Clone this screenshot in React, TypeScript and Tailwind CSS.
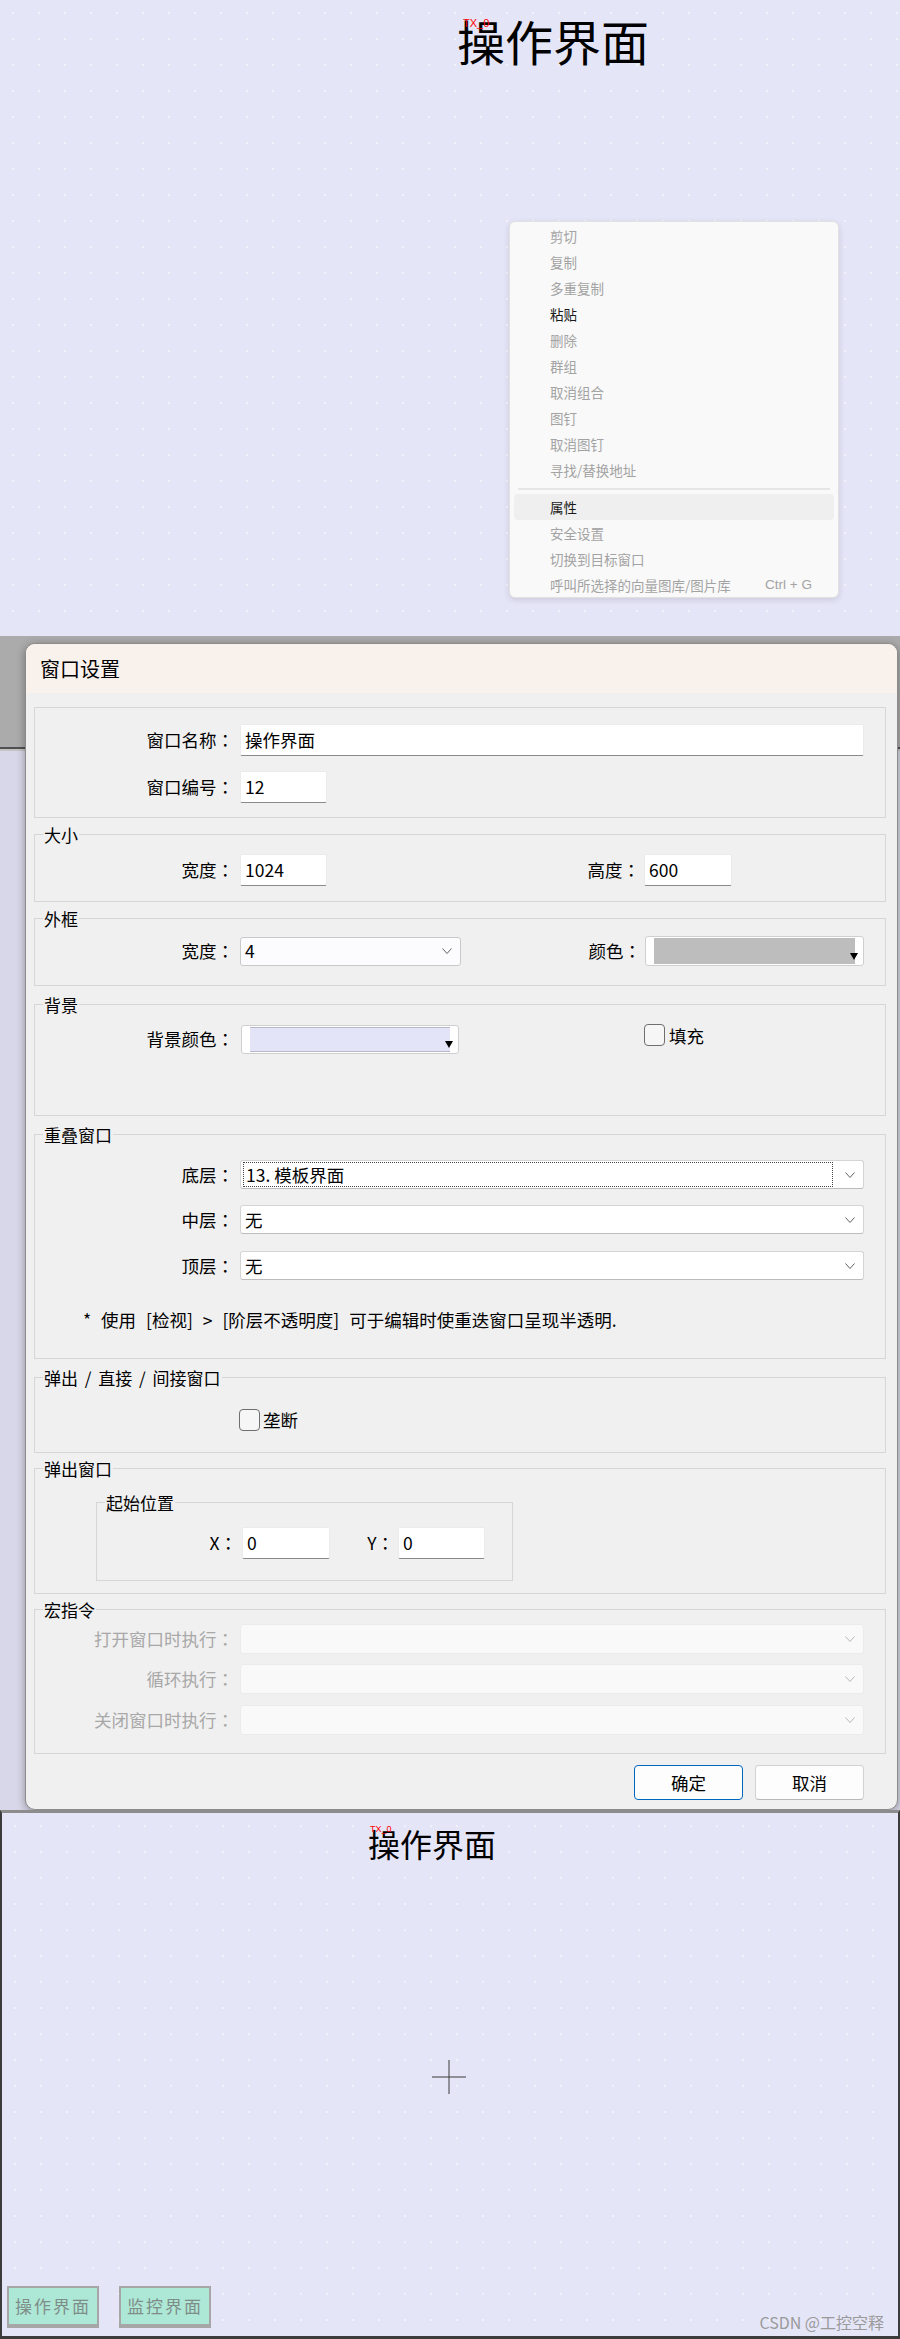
import React from "react";

const Chevron = ({ color = "#606060" }: { color?: string }) => (
  <svg width="10" height="6" viewBox="0 0 10 6" fill="none">
    <path d="M0.5 0.5L5 5.5L9.5 0.5" stroke={color} strokeWidth="1" />
  </svg>
);

const Colon = () => <span className="font-['Noto_Sans_CJK_JP','Noto_Sans_CJK_SC',sans-serif]">：</span>;

function Section({
  title,
  className,
  titleClass,
  children,
}: {
  title?: string;
  className: string;
  titleClass?: string;
  children?: React.ReactNode;
}) {
  return (
    <div className={"border border-[#d6d6d6] " + className}>
      {title && (
        <div
          className={
            "-mt-[10px] ml-[8px] w-fit bg-[#f0f0f0] px-[1px] text-[17px] leading-[20px] text-black " + (titleClass ?? "")
          }
        >
          {title}
        </div>
      )}
      {children}
    </div>
  );
}

const Label = ({ children, gray }: { children: React.ReactNode; gray?: boolean }) => (
  <div className={"w-[199px] shrink-0 text-right " + (gray ? "text-[#a8a8a8]" : "text-black")}>
    {children}
    <Colon />
  </div>
);

const TextBox = ({ className, children }: { className: string; children?: React.ReactNode }) => (
  <div
    className={
      "flex h-[32px] items-center rounded-[2px] border border-[#ebebeb] border-b-[#8a8a8a] bg-white pl-[4px] text-black " +
      className
    }
  >
    {children}
  </div>
);

const Select = ({
  className,
  children,
  disabled,
}: {
  className: string;
  children?: React.ReactNode;
  disabled?: boolean;
}) => (
  <div
    className={
      "flex items-center justify-between rounded-[3px] border pl-[4px] pr-[8px] " +
      (disabled ? "border-[#ebebeb] bg-[#f9f9f9]" : "border-[#d4d4d4] border-b-[#bcbcbc] bg-white") +
      " " +
      className
    }
  >
    <div className="flex items-center">{children}</div>
    <Chevron color={disabled ? "#b8b8b8" : "#606060"} />
  </div>
);

const ColorPick = ({ className, fill }: { className: string; fill: string }) => (
  <div className={"relative flex rounded-[3px] border border-[#cfcfcf] bg-white px-[8px] py-[1px] " + className}>
    <div className={"flex-1 " + fill} />
    <div className="absolute bottom-[5px] right-[5px] h-0 w-0 border-l-[4px] border-r-[4px] border-t-[7px] border-l-transparent border-r-transparent border-t-black" />
  </div>
);

const CheckBox = () => <div className="h-[22px] w-[21px] shrink-0 rounded-[4px] border border-[#6f6f6f] bg-[#f6f6f6]" />;

const menuTop: [string, boolean][] = [
  ["剪切", false],
  ["复制", false],
  ["多重复制", false],
  ["粘贴", true],
  ["删除", false],
  ["群组", false],
  ["取消组合", false],
  ["图钉", false],
  ["取消图钉", false],
  ["寻找/替换地址", false],
];

function ContextMenu() {
  return (
    <div className="absolute left-[509px] top-[221px] h-[377px] w-[330px] rounded-[6px] border border-[#e1e1e1] bg-[#f9f9f9] pt-[1px] text-[13.5px] shadow-[0_2px_6px_rgba(0,0,0,0.12)]">
      {menuTop.map(([t, en]) => (
        <div
          key={t}
          className={"mx-[4px] flex h-[26px] items-center pl-[36px] " + (en ? "text-[#1a1a1a]" : "text-[#a3a3a3]")}
        >
          {t}
        </div>
      ))}
      <div className="flex h-[11px] items-center px-[8px]">
        <div className="h-[2px] w-full bg-[#e6e6e6]" />
      </div>
      <div className="mx-[4px] flex h-[26px] items-center rounded-[4px] bg-[#efefef] pl-[36px] text-[#1a1a1a]">属性</div>
      <div className="mx-[4px] flex h-[26px] items-center pl-[36px] text-[#a3a3a3]">安全设置</div>
      <div className="mx-[4px] flex h-[26px] items-center pl-[36px] text-[#a3a3a3]">切换到目标窗口</div>
      <div className="mx-[4px] flex h-[26px] items-center justify-between pl-[36px] pr-[22px] text-[#a3a3a3]">
        <span>呼叫所选择的向量图库/图片库</span>
        <span className="font-['Liberation_Sans',sans-serif]">Ctrl + G</span>
      </div>
    </div>
  );
}

function Dialog() {
  return (
    <div className="ml-[25px] mt-[7px] h-[1167px] w-[873px] shrink-0 overflow-hidden rounded-[10px] border border-[#8c8c8c] bg-[#f0f0f0] text-[17.5px] leading-[20px] shadow-[0_2px_8px_rgba(0,0,0,0.35)]">
      <div className="flex h-[49px] items-center bg-[#f9f1ec] pl-[14px] text-[20px] text-black">窗口设置</div>
      <div className="flex flex-col pl-[8px] pr-[11px] pt-[14px]">
        {/* section 1 */}
        <Section className="h-[111px]">
          <div className="mt-[16px] flex h-[32px] items-center">
            <Label>窗口名称</Label>
            <TextBox className="ml-[6px] w-[624px]">操作界面</TextBox>
          </div>
          <div className="mt-[15px] flex h-[32px] items-center">
            <Label>窗口编号</Label>
            <TextBox className="ml-[6px] w-[87px]">12</TextBox>
          </div>
        </Section>

        {/* 大小 */}
        <Section title="大小" className="mt-[16px] h-[68px]">
          <div className="mt-[9px] flex h-[31px] items-center">
            <Label>宽度</Label>
            <TextBox className="ml-[6px] h-[31px] w-[87px]">1024</TextBox>
            <div className="w-[313px] shrink-0 text-right">
              高度
              <Colon />
            </div>
            <TextBox className="ml-[4px] h-[31px] w-[88px]">600</TextBox>
          </div>
        </Section>

        {/* 外框 */}
        <Section title="外框" className="mt-[16px] h-[68px]">
          <div className="mt-[7px] flex h-[30px] items-center">
            <Label>宽度</Label>
            <Select className="ml-[6px] h-[29px] w-[221px] !border-[#c9c9c9] !bg-[#fcfcfe]">4</Select>
            <div className="w-[180px] shrink-0 text-right">
              颜色
              <Colon />
            </div>
            <ColorPick className="ml-[4px] h-[30px] w-[219px]" fill="bg-[#bdbdbd]" />
          </div>
        </Section>

        {/* 背景 */}
        <Section title="背景" className="mt-[18px] h-[112px]">
          <div className="mt-[9px] flex items-start">
            <div className="mt-[5px]">
              <Label>背景颜色</Label>
            </div>
            <ColorPick
              className="ml-[7px] mt-[1px] h-[29px] w-[218px]"
              fill="bg-[#e4e4f8] border-y border-[#b8b8c8]"
            />
            <div className="ml-[185px]">
              <CheckBox />
            </div>
            <div className="ml-[4px] mt-[2px]">填充</div>
          </div>
        </Section>

        {/* 重叠窗口 */}
        <Section title="重叠窗口" className="mt-[18px] h-[225px]">
          <div className="mt-[15px] flex h-[29px] items-center">
            <Label>底层</Label>
            <Select className="ml-[6px] h-[29px] w-[624px] !pl-[2px]">
              <div className="flex h-[25px] w-[590px] items-center border border-dotted border-[#444] pl-[2px] text-black">
                13. 模板界面
              </div>
            </Select>
          </div>
          <div className="mt-[16px] flex h-[29px] items-center">
            <Label>中层</Label>
            <Select className="ml-[6px] h-[29px] w-[624px]">无</Select>
          </div>
          <div className="mt-[17px] flex h-[29px] items-center">
            <Label>顶层</Label>
            <Select className="ml-[6px] h-[29px] w-[624px]">无</Select>
          </div>
          <div className="ml-[48px] mt-[30px] text-black [word-spacing:6px]">
            * 使用 [检视] &gt; [阶层不透明度] 可于编辑时使重迭窗口呈现半透明.
          </div>
        </Section>

        {/* 弹出 / 直接 / 间接窗口 */}
        <Section title="弹出 / 直接 / 间接窗口" titleClass="[word-spacing:3px]" className="mt-[18px] h-[76px]">
          <div className="ml-[204px] mt-[21px] flex items-center">
            <CheckBox />
            <div className="ml-[3px]">垄断</div>
          </div>
        </Section>

        {/* 弹出窗口 */}
        <Section title="弹出窗口" className="mt-[15px] h-[126px]">
          <Section title="起始位置" className="ml-[61px] mt-[23px] h-[79px] w-[417px]">
            <div className="mt-[14px] flex h-[32px] items-center">
              <div className="w-[140px] shrink-0 text-right">
                X<Colon />
              </div>
              <TextBox className="ml-[5px] w-[88px]">0</TextBox>
              <div className="w-[64px] shrink-0 text-right">
                Y<Colon />
              </div>
              <TextBox className="ml-[4px] w-[87px]">0</TextBox>
            </div>
          </Section>
        </Section>

        {/* 宏指令 */}
        <Section title="宏指令" className="mt-[15px] h-[145px]">
          <div className="mt-[4px] flex h-[30px] items-center">
            <Label gray>打开窗口时执行</Label>
            <Select disabled className="ml-[6px] h-[30px] w-[624px]" />
          </div>
          <div className="mt-[10px] flex h-[30px] items-center">
            <Label gray>循环执行</Label>
            <Select disabled className="ml-[6px] h-[30px] w-[624px]" />
          </div>
          <div className="mt-[11px] flex h-[30px] items-center">
            <Label gray>关闭窗口时执行</Label>
            <Select disabled className="ml-[6px] h-[30px] w-[624px]" />
          </div>
        </Section>

        <div className="mt-[11px] flex justify-end gap-[12px] pr-[22px]">
          <div className="flex h-[35px] w-[109px] items-center justify-center rounded-[4px] border border-[#0067c0] bg-[#fdfdfd] text-black">
            确定
          </div>
          <div className="flex h-[35px] w-[109px] items-center justify-center rounded-[4px] border border-[#d2d2d2] border-b-[#b8b8b8] bg-[#fdfdfd] text-black">
            取消
          </div>
        </div>
      </div>
    </div>
  );
}

export default function App() {
  return (
    <div className="flex h-[2339px] w-[900px] flex-col overflow-hidden font-['Noto_Sans_CJK_SC','Noto_Sans',sans-serif]">
      {/* top canvas */}
      <div className="relative h-[636px] shrink-0 bg-[#e5e5f8] bg-[radial-gradient(circle,#f2f2fb_1px,transparent_1.5px)] bg-[length:26px_26px]">
        <div className="absolute left-[457px] top-[12px] text-[48px] leading-[56px] text-black">操作界面</div>
        <div className="absolute left-[463px] top-[18px] font-['Liberation_Sans',sans-serif] text-[11px] leading-none text-[#ff0000]">
          TX_0
        </div>
        <ContextMenu />
      </div>

      {/* middle region with dialog */}
      <div className="flex h-[1174px] shrink-0 bg-[linear-gradient(to_bottom,#ababab_0px,#ababab_111px,#505050_111px,#505050_113px,#c4c4c4_113px,#c4c4c4_115px,#d7d7e9_115px)]">
        <Dialog />
      </div>

      {/* bottom canvas */}
      <div className="relative h-[529px] shrink-0 border-b-[3px] border-l-2 border-r-2 border-t-[3px] border-[#3c3c3c] border-t-[#8c8c8c] bg-[#e5e5f8] bg-[radial-gradient(circle,#f2f2fb_1px,transparent_1.5px)] bg-[length:26px_26px]">
        <div className="absolute left-[366px] top-[10px] text-[32px] leading-[40px] text-black">操作界面</div>
        <div className="absolute left-[368px] top-[12px] font-['Liberation_Sans',sans-serif] text-[9px] leading-none text-[#ff0000]">
          TX_0
        </div>
        <svg className="absolute left-[429px] top-[246px]" width="36" height="36" viewBox="0 0 36 36">
          <path d="M18 1V35M1 18H35" stroke="#3a3a3a" strokeWidth="1" />
        </svg>
        <div className="absolute bottom-[8px] left-[5px] flex h-[42px] w-[92px] items-center justify-center border-2 border-b-[4px] border-[#a6a6a6] bg-[#ade8d6] text-[17px] leading-[20px] tracking-[2px] text-[#7f8d89]">
          操作界面
        </div>
        <div className="absolute bottom-[8px] left-[117px] flex h-[42px] w-[92px] items-center justify-center border-2 border-b-[4px] border-[#a6a6a6] bg-[#ade8d6] text-[17px] leading-[20px] tracking-[2px] text-[#7f8d89]">
          监控界面
        </div>
        <div className="absolute bottom-[4px] right-[14px] text-[16px] leading-[20px] text-[#9a9a9a]">CSDN @工控空释</div>
      </div>
    </div>
  );
}
